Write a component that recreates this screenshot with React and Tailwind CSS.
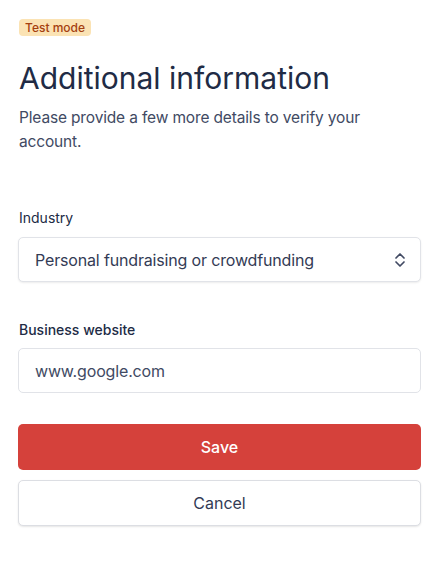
export default function App() {
  return (
    <div
      className="min-h-screen bg-white px-[18px] pt-[19px]"
      style={{ fontFamily: "Inter, 'Liberation Sans', sans-serif" }}
    >
      <div className="flex">
        <span className="ml-px rounded-[4px] bg-[#fbe3b4] px-[6px] py-[1px] text-[12px] font-medium leading-[15px] text-[#a5400f]">
          Test mode
        </span>
      </div>

      <h1 className="mt-[24px] ml-px text-[30px] leading-[36px] text-[#212b45]">
        Additional information
      </h1>
      <p className="mt-[10px] ml-px max-w-[370px] text-[15.5px] leading-[24px] tracking-[-0.01em] text-[#414a63]">
        Please provide a few more details to verify your account.
      </p>

      <div className="mt-[54px]">
        <label className="ml-px block text-[14px] leading-[20px] text-[#212b45]">Industry</label>
        <div className="mt-[9px] flex h-[45px] items-center justify-between rounded-[5px] border border-[#e1e3e8] bg-white pl-[16px] pr-[14px] shadow-[0_1px_2px_rgba(0,0,0,0.08)]">
          <span className="text-[16px] tracking-[-0.01em] text-[#333b55]">
            Personal fundraising or crowdfunding
          </span>
          <svg width="12" height="16" viewBox="0 0 12 16" fill="none" stroke="#414a63" strokeWidth="1.7" strokeLinecap="round" strokeLinejoin="round">
            <path d="M2 6 6 2l4 4" />
            <path d="M2 10l4 4 4-4" />
          </svg>
        </div>
      </div>

      <div className="mt-[38px]">
        <label className="ml-px block text-[14px] font-medium leading-[20px] text-[#212b45]">
          Business website
        </label>
        <div className="mt-[8px] flex h-[45px] items-center rounded-[5px] border border-[#e1e3e8] bg-white pl-[16px]">
          <span className="text-[16px] tracking-[-0.01em] text-[#414a63]">www.google.com</span>
        </div>
      </div>

      <button className="mt-[31px] flex h-[46px] w-full items-center justify-center rounded-[5px] bg-[#d5413b] text-[16px] font-medium text-white">
        Save
      </button>
      <button className="mt-[10px] flex h-[46px] w-full items-center justify-center rounded-[5px] border border-[#dcdee3] bg-white text-[16px] text-[#333b55] shadow-[0_1px_2px_rgba(0,0,0,0.1)]">
        Cancel
      </button>
    </div>
  );
}
